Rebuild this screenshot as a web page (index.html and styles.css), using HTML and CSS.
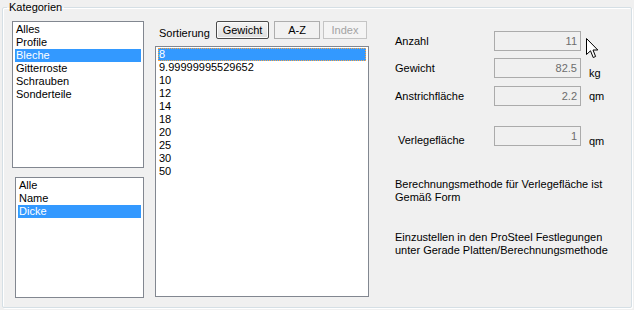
FILE: index.html
```html
<!DOCTYPE html>
<html lang="de">
<head>
  <meta charset="UTF-8" />
  <title>Kategorien</title>
  <link rel="stylesheet" href="styles.css">
</head>
<body>

  <fieldset class="group">
    <legend>Kategorien</legend>

    <div class="content">
      <!-- Kategorie / Gruppierung -->
      <div class="col-lists">
        <ul class="list list-cat">
          <li>Alles</li>
          <li>Profile</li>
          <li class="selected">Bleche</li>
          <li>Gitterroste</li>
          <li>Schrauben</li>
          <li>Sonderteile</li>
        </ul>
        <ul class="list list-group">
          <li>Alle</li>
          <li>Name</li>
          <li class="selected">Dicke</li>
        </ul>
      </div>

      <!-- Werte -->
      <div class="col-sort">
        <div class="toolbar">
          <span class="toolbar-label">Sortierung</span>
          <button class="btn btn-default">Gewicht</button>
          <button class="btn btn-flat">A-Z</button>
          <button class="btn btn-disabled" disabled>Index</button>
        </div>
        <ul class="list list-values">
          <li class="selected focused">8</li>
          <li>9.99999995529652</li>
          <li>10</li>
          <li>12</li>
          <li>14</li>
          <li>18</li>
          <li>20</li>
          <li>25</li>
          <li>30</li>
          <li>50</li>
        </ul>
      </div>

      <!-- Summen -->
      <div class="col-props">
        <div class="row row-first">
          <span class="row-label">Anzahl</span>
          <div class="field">11</div>
        </div>
        <div class="row">
          <span class="row-label">Gewicht</span>
          <div class="field">82.5</div>
          <span class="unit unit-low">kg</span>
        </div>
        <div class="row">
          <span class="row-label">Anstrichfläche</span>
          <div class="field">2.2</div>
          <span class="unit">qm</span>
        </div>
        <div class="row row-area">
          <span class="row-label row-label-low">Verlegefläche</span>
          <div class="field">1</div>
          <span class="unit unit-low">qm</span>
        </div>

        <p class="note note-first">Berechnungsmethode für Verlegefläche ist<br />Gemäß Form</p>
        <p class="note">Einzustellen in den ProSteel Festlegungen<br />unter Gerade Platten/Berechnungsmethode</p>
      </div>
    </div>
  </fieldset>

  <svg class="cursor" width="13" height="21" viewBox="0 0 13 21">
    <path d="M0.5 0.5 L0.5 16.5 L4.5 12.8 L7.2 19.5 L9.6 18.5 L7 12 L11.8 12 Z" fill="#fff" stroke="#000" stroke-width="1" stroke-linejoin="miter" />
  </svg>

</body>
</html>
```

FILE: styles.css
```css
body {
  font-family: "Liberation Sans", Arial, sans-serif;
  font-size: 11px;
  color: #000;
  background-color: #f0f0f0;
  margin: 0;
  padding: 0;
  width: 634px;
  height: 310px;
  overflow: hidden;
}

.group {
  margin: 0 2px;
  padding: 0;
  width: 628px;
  border: 1px solid #d5dfe5;
  box-shadow: inset 1px 1px 0 #fff, 1px 1px 0 #fff;
  border-radius: 2px;
}

.group legend {
  margin-left: 4px;
  padding: 0 2px;
  line-height: 14px;
  font-size: 11px;
}

.content {
  display: flex;
  height: 293px;
}

/* Listen */

.list {
  list-style: none;
  margin: 0;
  padding: 1px 2px;
  background-color: #fff;
  border: 1px solid #828790;
  box-sizing: border-box;
  overflow: hidden;
}

.list li {
  height: 13px;
  line-height: 13px;
  padding-left: 1px;
  white-space: nowrap;
  box-sizing: border-box;
}

.list li.selected {
  background-color: #3399ff;
  color: #fff;
}

.list li.focused {
  outline: 1px dotted #ffa640;
  outline-offset: -1px;
}

.col-lists {
  display: flex;
  flex-direction: column;
  margin-left: 9px;
  width: 132px;
}

.list-cat {
  margin-top: 7px;
  height: 147px;
}

.list-group {
  margin-top: 9px;
  margin-left: 3px;
  height: 121px;
}

/* Sortierung */

.col-sort {
  margin-left: 11px;
  width: 214px;
}

.toolbar {
  display: flex;
  align-items: center;
  margin-top: 7px;
  height: 18px;
}

.toolbar-label {
  margin-left: 4px;
  width: 57px;
  padding-top: 6px;
}

.btn {
  font-family: "Liberation Sans", Arial, sans-serif;
  font-size: 11px;
  height: 18px;
  padding: 0;
  margin: 0;
  box-sizing: border-box;
}

.btn-default {
  width: 53px;
  color: #000;
  border: 1px solid #4a4a4a;
  border-radius: 2px;
  background: linear-gradient(#f4f4f4, #dedede);
  box-shadow: inset 0 0 0 1px #fbfbfb;
}

.btn-flat {
  width: 46px;
  margin-left: 5px;
  color: #000;
  border: 1px solid #adadad;
  background-color: #f1f1f1;
}

.btn-disabled {
  width: 44px;
  margin-left: 3px;
  color: #a3a3a3;
  border: 1px solid #c4c4c4;
  background-color: #f4f4f4;
}

.list-values {
  margin-top: 7px;
  height: 251px;
}

/* Summen */

.col-props {
  margin-left: 26px;
  width: 230px;
}

.row {
  display: flex;
  align-items: center;
  height: 20px;
  margin-top: 7px;
}

.row-first {
  margin-top: 17px;
}

.row + .row + .row {
  margin-top: 8px;
}

.row-area {
  margin-top: 20px !important;
}

.row-label {
  width: 99px;
}

.row-label-low {
  padding-left: 3px;
  width: 96px;
  padding-top: 7px;
}

.field {
  width: 87px;
  height: 20px;
  line-height: 18px;
  box-sizing: border-box;
  border: 1px solid #ababab;
  background-color: #f0f0f0;
  color: #6d6d6d;
  text-align: right;
  padding-right: 3px;
}

.unit {
  margin-left: 8px;
}

.unit-low {
  padding-top: 10px;
}

.note {
  margin: 27px 0 0 0;
  line-height: 13px;
}

.note-first {
  margin-top: 32px;
}

.cursor {
  position: absolute;
  left: 586px;
  top: 38px;
}
```
